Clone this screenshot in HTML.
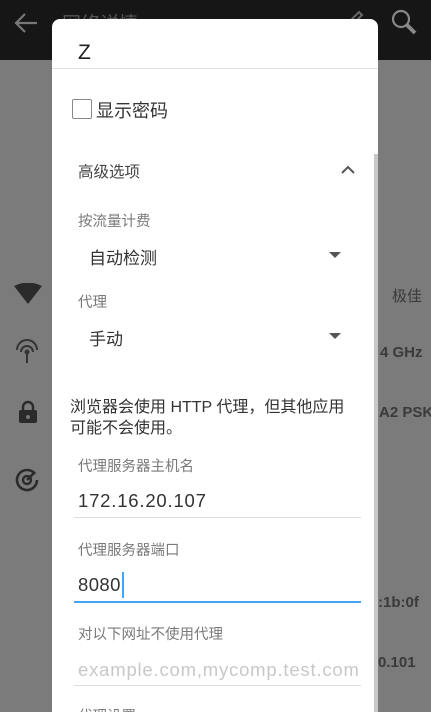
<!DOCTYPE html>
<html><head><meta charset="utf-8"><style>
*{margin:0;padding:0;box-sizing:border-box}
html,body{width:431px;height:712px;overflow:hidden}
body{position:relative;background:#7b7b7b;font-family:"Liberation Sans","Noto Sans CJK SC",sans-serif}
.top{position:absolute;left:0;top:0;width:431px;height:60px;background:#161616}
.a{position:absolute;white-space:nowrap}
.bg{color:#3a3a3a;font-size:15px}
.dlg{position:absolute;left:52px;top:19px;width:326px;height:693px;background:#fff;border-radius:8px 8px 0 0;overflow:hidden}
.lbl{color:#7a7a7a;font-size:14.5px}
.ln{position:absolute;left:22px;width:287px;height:1px;background:#ddd}
</style></head><body>
<div class="top">
<svg class="a" style="left:13px;top:10px" width="28" height="26" viewBox="0 0 28 26"><path d="M24 13H4M12 4L3 13l9 9" stroke="#777" stroke-width="2.2" fill="none"/></svg>
<div class="a" style="left:62px;top:9px;color:#555;font-size:19px">网络详情</div>
<svg class="a" style="left:345px;top:8px" width="22" height="16"><path d="M4 14L14 4l3 3L7 17" stroke="#666" stroke-width="2" fill="none"/></svg>
<svg class="a" style="left:390px;top:8px" width="30" height="30"><circle cx="11" cy="11" r="8" stroke="#888" stroke-width="2.2" fill="none"/><path d="M17 17l8 8" stroke="#888" stroke-width="4"/></svg>
</div>
<svg class="a" style="left:13px;top:283px" width="30" height="22"><path d="M1 3Q15 -4 29 3L15 21Z" fill="#2a2a2a"/></svg>
<svg class="a" style="left:13px;top:338px" width="28" height="28"><path d="M4 12A10 10 0 0 1 24 12M8 14A6 6 0 0 1 20 14" stroke="#333" stroke-width="2" fill="none"/><circle cx="14" cy="14" r="2.5" fill="#333"/><path d="M14 16v9" stroke="#333" stroke-width="2"/></svg>
<svg class="a" style="left:18px;top:400px" width="20" height="24"><path d="M5 10V7a5 5 0 0 1 10 0v3" stroke="#2a2a2a" stroke-width="2.4" fill="none"/><rect x="1" y="10" width="18" height="13" rx="2" fill="#2a2a2a"/><circle cx="10" cy="17" r="2" fill="#777"/></svg>
<svg class="a" style="left:13px;top:466px" width="28" height="28"><path d="M22 8A10 10 0 1 0 24 14" stroke="#2a2a2a" stroke-width="2.6" fill="none"/><circle cx="14" cy="14" r="4" stroke="#2a2a2a" stroke-width="2.4" fill="none"/><path d="M14 14l8-8" stroke="#2a2a2a" stroke-width="2.6"/></svg>
<div class="a bg" style="left:392px;top:285px">极佳</div>
<div class="a bg" style="left:380px;top:344px;font-weight:bold">4 GHz</div>
<div class="a bg" style="left:379px;top:404px;font-weight:bold">A2 PSK</div>
<div class="a bg" style="left:378px;top:594px;font-weight:bold">:1b:0f</div>
<div class="a bg" style="left:378px;top:654px;font-weight:bold">0.101</div>
<div class="dlg">
<div class="a" style="left:26px;top:22px;font-size:21px;color:#222">Z</div>
<div class="a" style="left:0;top:49px;width:326px;height:1px;background:#dde2e2"></div>
<div class="a" style="left:20px;top:80px;width:20px;height:20px;border:1.6px solid #888;border-radius:2px"></div>
<div class="a" style="left:44px;top:78px;font-size:18px;color:#333">显示密码</div>
<div class="a" style="left:26px;top:141px;font-size:15.5px;color:#444">高级选项</div>
<svg class="a" style="left:288px;top:145px" width="16" height="12"><path d="M2 9l6-6 6 6" stroke="#555" stroke-width="2" fill="none"/></svg>
<div class="a" style="left:322px;top:135px;width:4px;height:600px;background:#c8c8c8"></div>
<div class="a lbl" style="left:26px;top:191px">按流量计费</div>
<div class="a" style="left:37px;top:225px;font-size:17px;color:#333">自动检测</div>
<svg class="a" style="left:277px;top:233px" width="12" height="7"><path d="M0 0h12L6 6z" fill="#555"/></svg>
<div class="a lbl" style="left:26px;top:272px">代理</div>
<div class="a" style="left:37px;top:306px;font-size:17px;color:#333">手动</div>
<svg class="a" style="left:277px;top:314px" width="12" height="7"><path d="M0 0h12L6 6z" fill="#555"/></svg>
<div class="a" style="left:18px;top:378px;font-size:16px;line-height:21px;color:#333">浏览器会使用 HTTP 代理，但其他应用<br>可能不会使用。</div>
<div class="a lbl" style="left:26px;top:436px">代理服务器主机名</div>
<div class="a" style="left:26px;top:471px;font-size:18.5px;color:#333;letter-spacing:0.8px">172.16.20.107</div>
<div class="ln" style="top:498px"></div>
<div class="a lbl" style="left:26px;top:520px">代理服务器端口</div>
<div class="a" style="left:26px;top:555px;font-size:18.5px;color:#333;letter-spacing:0.4px">8080</div>
<div class="a" style="left:70px;top:553px;width:2px;height:26px;background:#42a5f5"></div>
<div class="a" style="left:22px;top:582px;width:287px;height:2px;background:#42a5f5"></div>
<div class="a lbl" style="left:26px;top:604px">对以下网址不使用代理</div>
<div class="a" style="left:26px;top:640px;font-size:18.5px;color:#c8c8c8;letter-spacing:0.8px">example.com,mycomp.test.com</div>
<div class="ln" style="top:666px"></div>
<div class="a lbl" style="left:26px;top:686px">代理设置</div>
</div>
</body></html>
